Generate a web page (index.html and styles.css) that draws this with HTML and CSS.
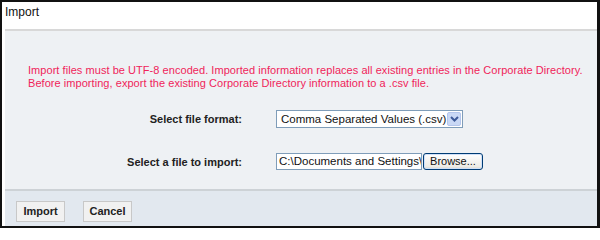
FILE: index.html
```html
<!DOCTYPE html>
<html>
<head>
<meta charset="utf-8">
<link rel="stylesheet" href="styles.css">
</head>
<body>
<div class="frame">
  <div class="header">Import</div>
  <div class="panel">
    <div class="body">
      <p class="warning">Import files must be UTF-8 encoded. Imported information replaces all existing entries in the Corporate Directory.<br>Before importing, export the existing Corporate Directory information to a .csv file.</p>
      <div class="row row-format">
        <label class="label">Select file format:</label>
        <div class="select">
          <span class="select-text">Comma Separated Values (.csv)</span>
          <span class="select-btn">
            <svg width="9" height="6" viewBox="0 0 9 6"><path d="M1 1 L4.5 4.5 L8 1" fill="none" stroke="#3d5a99" stroke-width="2"/></svg>
          </span>
        </div>
      </div>
      <div class="row row-file">
        <label class="label">Select a file to import:</label>
        <div class="file-input">C:\Documents and Settings\</div>
        <div class="browse">Browse...</div>
      </div>
    </div>
    <div class="footer">
      <div class="btn">Import</div>
      <div class="btn">Cancel</div>
    </div>
  </div>
</div>
</body>
</html>
```
FILE: styles.css
```css
html, body {
  margin: 0;
  padding: 0;
}
body {
  width: 600px;
  height: 228px;
  font-family: "Liberation Sans", Arial, sans-serif;
  background: #ffffff;
}
.frame {
  box-sizing: border-box;
  width: 600px;
  height: 228px;
  border: 2px solid #111111;
  border-right-width: 3px;
  display: flex;
  flex-direction: column;
  background: #ffffff;
}
.header {
  height: 27px;
  padding-left: 3px;
  font-size: 12px;
  line-height: 12px;
  padding-top: 4px;
  box-sizing: border-box;
  color: #111111;
}
.panel {
  flex: 1;
  margin-left: 3px;
  border-top: 2px solid #d8d8d8;
  display: flex;
  flex-direction: column;
}
.body {
  background: #eef1f4;
  height: 158px;
  flex-shrink: 0;
  box-sizing: border-box;
  padding-top: 33px;
  padding-left: 23px;
}
.warning {
  margin: 0;
  color: #f0245a;
  font-size: 11px;
  line-height: 13px;
  letter-spacing: 0.05px;
  white-space: nowrap;
}
.row {
  display: flex;
  align-items: center;
}
.row-format {
  margin-top: 20px;
  height: 18px;
}
.row-file {
  margin-top: 25px;
  height: 17px;
}
.label {
  width: 214px;
  flex-shrink: 0;
  text-align: right;
  font-weight: bold;
  font-size: 11px;
  color: #222222;
  margin-right: 34px;
}
.select {
  box-sizing: border-box;
  width: 187px;
  height: 18px;
  flex-shrink: 0;
  border: 1px solid #7f9db9;
  background: #ffffff;
  display: flex;
  align-items: center;
  justify-content: space-between;
  overflow: hidden;
}
.select-text {
  font-size: 11.5px;
  padding-left: 4px;
  white-space: nowrap;
  color: #111111;
}
.select-btn {
  box-sizing: border-box;
  flex-shrink: 0;
  width: 14px;
  height: 14px;
  margin-right: 1px;
  background: #c9d8f5;
  border: 1px solid #b4c6ec;
  border-radius: 2px;
  display: flex;
  align-items: center;
  justify-content: center;
}
.file-input {
  box-sizing: border-box;
  width: 146px;
  height: 17px;
  flex-shrink: 0;
  border: 1px solid #7f9db9;
  background: #ffffff;
  font-size: 11.5px;
  line-height: 15px;
  padding-left: 2px;
  overflow: hidden;
  white-space: nowrap;
  color: #111111;
}
.browse {
  box-sizing: border-box;
  width: 60px;
  height: 17px;
  flex-shrink: 0;
  margin-left: 1px;
  border: 1px solid #003c74;
  border-radius: 3px;
  background: linear-gradient(#ffffff, #ecebe6 85%, #d6d0c5);
  box-shadow: inset 0 0 0 1px #cfe0f8;
  font-size: 11px;
  line-height: 15px;
  text-align: center;
  color: #111111;
}
.footer {
  flex: 1;
  border-top: 2px solid #cdd2d6;
  background: #e2e8ef;
  display: flex;
  align-items: flex-start;
  padding-top: 10px;
  padding-left: 11px;
  gap: 18px;
}
.btn {
  box-sizing: border-box;
  width: 49px;
  height: 21px;
  border: 1px solid #c8c8c8;
  background: #f1f1f1;
  font-size: 11px;
  font-weight: bold;
  line-height: 19px;
  text-align: center;
  color: #222222;
}
```
